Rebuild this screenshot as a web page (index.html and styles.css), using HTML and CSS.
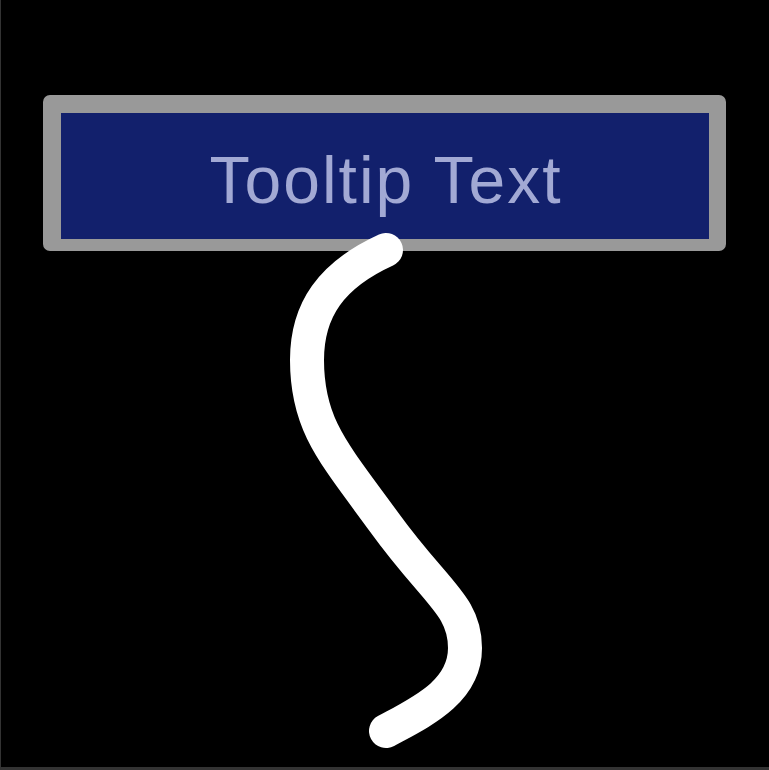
FILE: index.html
```html
<!DOCTYPE html>
<html>
<head>
<meta charset="utf-8">
<title>Tooltip</title>
<link rel="stylesheet" href="styles.css">
</head>
<body>
<div class="screen">
  <div class="tooltip">
    <div class="tooltip-inner">Tooltip Text</div>
  </div>
  <svg class="pointer" viewBox="0 0 769 770" width="769" height="770" aria-hidden="true">
    <path d="M385,250 C330,275 306,310 306,360 C306,425 332,452 383,522 C435,594 464,605 464,648 C464,692 420,712 385,731" fill="none" stroke="#ffffff" stroke-width="34" stroke-linecap="round" stroke-linejoin="round"/>
  </svg>
</div>
</body>
</html>
```
FILE: styles.css
```css
html, body {
  margin: 0;
  padding: 0;
  background: #000000;
}

.screen {
  position: relative;
  width: 769px;
  height: 770px;
  box-sizing: border-box;
  background: #000000;
  border-left: 1px solid #333333;
  border-bottom: 3px solid #333333;
  padding-top: 95px;
  padding-left: 42px;
  overflow: hidden;
}

.tooltip {
  width: 683px;
  box-sizing: border-box;
  border-style: solid;
  border-color: #999999;
  border-width: 18px 17px 12px 18px;
  border-radius: 7px;
  background: #999999;
}

.tooltip-inner {
  height: 126px;
  box-sizing: border-box;
  padding-top: 8px;
  padding-left: 2px;
  background: #12206c;
  color: #a2a9d4;
  font-family: "Liberation Sans", Arial, sans-serif;
  font-size: 66px;
  letter-spacing: 2px;
  line-height: 118px;
  text-align: center;
  white-space: nowrap;
}

.pointer {
  position: absolute;
  left: 0;
  top: 0;
}
```
